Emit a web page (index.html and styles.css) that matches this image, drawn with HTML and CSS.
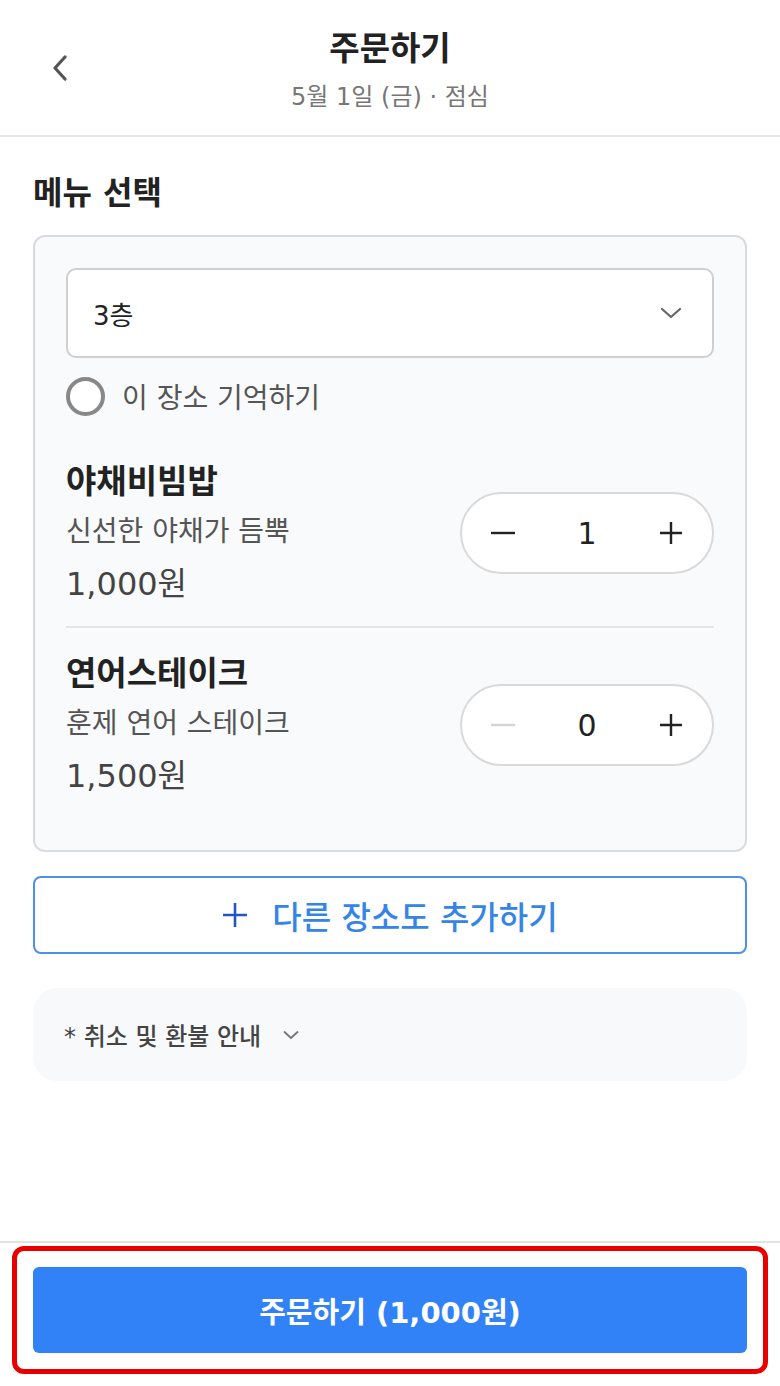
FILE: index.html
```html
<!DOCTYPE html>
<html lang="ko">
<head>
<meta charset="utf-8">
<title>주문하기</title>
<link rel="stylesheet" href="styles.css">
</head>
<body>
<div class="page">
  <header class="header">
    <button class="back" aria-label="뒤로">
      <svg width="18" height="26" viewBox="0 0 18 26"><path d="M14 2 L4 13 L14 24" fill="none" stroke="#555" stroke-width="3.2" stroke-linecap="round" stroke-linejoin="round"/></svg>
    </button>
    <h1 class="title">주문하기</h1>
    <p class="subtitle">5월 1일 (금) · 점심</p>
  </header>

  <main class="main">
    <h2 class="section-title">메뉴 선택</h2>

    <section class="card">
      <div class="select">
        <span class="select-value">3층</span>
        <svg class="select-chev" width="22" height="14" viewBox="0 0 22 14"><path d="M2 3 L11 11 L20 3" fill="none" stroke="#666" stroke-width="2.2" stroke-linecap="round" stroke-linejoin="round"/></svg>
      </div>
      <label class="remember">
        <span class="radio"></span>
        <span class="remember-text">이 장소 기억하기</span>
      </label>

      <div class="item">
        <div class="item-info">
          <div class="item-name">야채비빔밥</div>
          <div class="item-desc">신선한 야채가 듬뿍</div>
          <div class="item-price">1,000원</div>
        </div>
        <div class="stepper">
          <span class="step-btn"><svg width="26" height="26" viewBox="0 0 26 26"><path d="M1 13 H25" stroke="#222" stroke-width="2.4"/></svg></span>
          <span class="step-num">1</span>
          <span class="step-btn"><svg width="26" height="26" viewBox="0 0 26 26"><path d="M2 13 H24 M13 2 V24" stroke="#222" stroke-width="2.4"/></svg></span>
        </div>
      </div>
      <div class="divider"></div>
      <div class="item">
        <div class="item-info">
          <div class="item-name">연어스테이크</div>
          <div class="item-desc">훈제 연어 스테이크</div>
          <div class="item-price">1,500원</div>
        </div>
        <div class="stepper">
          <span class="step-btn"><svg width="26" height="26" viewBox="0 0 26 26"><path d="M1 13 H25" stroke="#d4d4d4" stroke-width="2.4"/></svg></span>
          <span class="step-num">0</span>
          <span class="step-btn"><svg width="26" height="26" viewBox="0 0 26 26"><path d="M2 13 H24 M13 2 V24" stroke="#222" stroke-width="2.4"/></svg></span>
        </div>
      </div>
    </section>

    <button class="add-btn">
      <svg class="add-plus" width="26" height="26" viewBox="0 0 26 26"><path d="M1 13 H25 M13 1 V25" stroke="#2456c0" stroke-width="2.6"/></svg>
      <span>다른 장소도 추가하기</span>
    </button>

    <div class="notice">
      <span>* 취소 및 환불 안내</span>
      <svg width="16" height="10" viewBox="0 0 16 10"><path d="M1.5 2 L8 8 L14.5 2" fill="none" stroke="#777" stroke-width="1.8" stroke-linecap="round" stroke-linejoin="round"/></svg>
    </div>
  </main>

  <footer class="footer">
    <div class="highlight">
      <button class="order-btn">주문하기 (1,000원)</button>
    </div>
  </footer>
</div>
</body>
</html>
```

FILE: styles.css
```css
* { box-sizing: border-box; }
html, body { margin: 0; padding: 0; background: #fff; }
body {
  font-family: "DejaVu Sans", "Noto Sans CJK KR", sans-serif;
  color: #222;
}
.page {
  min-height: 1386px;
  display: flex;
  flex-direction: column;
}
button { font-family: inherit; }

.header {
  position: relative;
  height: 137px;
  border-bottom: 2px solid #e6e6e6;
  display: flex;
  flex-direction: column;
  align-items: center;
  padding-top: 29px;
}
.back {
  position: absolute;
  left: 51px;
  top: 55px;
  border: 0;
  background: none;
  padding: 0;
  width: 18px;
  height: 26px;
}
.back svg { display: block; }
.title {
  margin: 0;
  font-size: 33px;
  line-height: 40px;
  font-weight: 700;
  color: #222;
}
.subtitle {
  margin: 13px 0 0;
  font-size: 24px;
  line-height: 30px;
  color: #777;
}

.main {
  flex: 1;
  padding: 0 33px;
}
.section-title {
  margin: 35px 0 0;
  font-size: 32px;
  line-height: 42px;
  font-weight: 700;
  color: #222;
}

.card {
  margin-top: 21px;
  background: #f8fafc;
  border: 2px solid #d8dbdf;
  border-radius: 12px;
  padding: 31px 31px 32px;
}
.select {
  height: 90px;
  background: #fff;
  border: 2px solid #cfcfcf;
  border-radius: 10px;
  padding: 0 30px 0 25px;
  display: flex;
  align-items: center;
  justify-content: space-between;
}
.select-value { font-size: 26px; color: #222; }
.select-chev { display: block; }

.remember {
  margin-top: 18px;
  display: flex;
  align-items: center;
  gap: 17px;
}
.radio {
  width: 39px;
  height: 39px;
  border: 4px solid #888;
  border-radius: 50%;
  background: #fff;
}
.remember-text { font-size: 28px; color: #555; }

.item {
  display: flex;
  align-items: center;
  justify-content: space-between;
  padding: 26px 0 22px;
}
.remember + .item { margin-top: 20px; }
.item-name {
  font-size: 33px;
  line-height: 40px;
  font-weight: 700;
  color: #222;
}
.item-desc {
  margin-top: 10px;
  font-size: 28px;
  line-height: 40px;
  color: #555;
}
.item-price {
  margin-top: 12px;
  font-size: 32px;
  line-height: 40px;
  color: #444;
}
.divider {
  height: 2px;
  background: #e3e5e8;
}

.stepper {
  width: 254px;
  height: 82px;
  background: #fff;
  border: 2px solid #dadada;
  border-radius: 41px;
  display: grid;
  grid-template-columns: 82px 1fr 82px;
  align-items: center;
  justify-items: center;
}
.step-btn { display: flex; }
.step-btn svg { display: block; }
.step-num { font-size: 30px; color: #222; }

.add-btn {
  margin-top: 24px;
  width: 100%;
  height: 78px;
  background: #fff;
  border: 2px solid #4d90e8;
  border-radius: 8px;
  display: flex;
  align-items: center;
  justify-content: center;
  gap: 24px;
  font-size: 32px;
  font-weight: 500;
  color: #3585e6;
  padding: 0;
}
.add-plus { display: block; }

.notice {
  margin-top: 34px;
  height: 93px;
  background: #f7f9fb;
  border-radius: 24px;
  padding: 0 31px;
  display: flex;
  align-items: center;
  gap: 22px;
  font-size: 24px;
  font-weight: 500;
  color: #444;
}
.notice svg { display: block; }

.footer {
  border-top: 2px solid #e2e2e2;
  padding: 3px 12px 12px;
}
.highlight {
  border: 5px solid #e80000;
  border-radius: 12px;
  padding: 16px;
}
.order-btn {
  display: block;
  width: 100%;
  height: 86px;
  border: 0;
  border-radius: 6px;
  background: #3182f6;
  color: #fff;
  font-size: 29px;
  font-weight: 700;
}
```
